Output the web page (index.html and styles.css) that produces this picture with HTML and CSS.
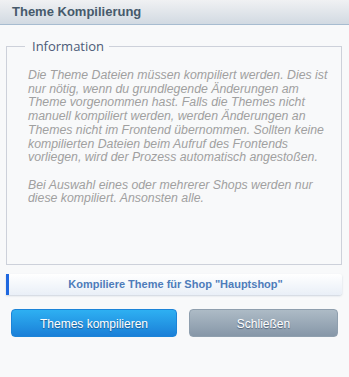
FILE: index.html
```html
<!DOCTYPE html>
<html lang="de">
<head>
    <meta charset="UTF-8">
    <title>Theme Kompilierung</title>
    <link rel="stylesheet" href="styles.css">
</head>
<body>
    <div class="window">
        <div class="titlebar">Theme Kompilierung</div>
        <div class="content">
            <fieldset class="info">
                <legend>Information</legend>
                <p>Die Theme Dateien müssen kompiliert werden. Dies ist nur nötig, wenn du grundlegende Änderungen am Theme vorgenommen hast. Falls die Themes nicht manuell kompiliert werden, werden Änderungen an Themes nicht im Frontend übernommen. Sollten keine kompilierten Dateien beim Aufruf des Frontends vorliegen, wird der Prozess automatisch angestoßen.<br><br>Bei Auswahl eines oder mehrerer Shops werden nur diese kompiliert. Ansonsten alle.</p>
            </fieldset>
            <div class="progress">Kompiliere Theme für Shop "Hauptshop"</div>
            <div class="actions">
                <button class="btn btn-primary">Themes kompilieren</button>
                <button class="btn btn-secondary">Schließen</button>
            </div>
        </div>
    </div>
</body>
</html>
```

FILE: styles.css
```css
body {
    margin: 0;
    font-family: "Liberation Sans", Arial, sans-serif;
    background: #f8f9fa;
}
.window {
    width: 349px;
    height: 377px;
    display: flex;
    flex-direction: column;
}
.titlebar {
    height: 24px;
    line-height: 24px;
    padding-left: 12px;
    font-size: 13px;
    font-weight: bold;
    color: #465a6b;
    background: linear-gradient(#f0f1f3, #d2dae2);
    border-bottom: 1px solid #a7bcd0;
}
.content {
    padding: 12px 7px 0 6px;
}
.info {
    margin: 0;
    padding: 14px 10px 0 21px;
    height: 228px;
    box-sizing: border-box;
    border: 1px solid #cdd1da;
    border-radius: 0;
}
.info legend {
    margin-left: -3px;
    padding: 0 5px 0 7px;
    font-family: "Open Sans", sans-serif;
    font-size: 13px;
    color: #4c5b78;
}
.info p {
    margin: 0;
    font-size: 12.3px;
    line-height: 13.7px;
    font-style: italic;
    color: #a0a0a0;
}
.progress {
    margin-top: 9px;
    height: 21px;
    line-height: 21px;
    text-align: center;
    font-size: 11px;
    font-weight: bold;
    color: #4e7cba;
    background: linear-gradient(#ffffff, #e9eff7);
    border-left: 3px solid #1f68e0;
    border-radius: 0 3px 3px 0;
    box-shadow: 0 1px 2px rgba(120, 140, 170, 0.35);
}
.actions {
    display: flex;
    justify-content: space-between;
    padding: 14px 4px 0 5px;
}
.btn {
    height: 28px;
    padding-top: 2px;
    border-radius: 4px;
    font-family: "Liberation Sans", Arial, sans-serif;
    font-size: 12px;
    color: #ffffff;
    text-shadow: 0 1px 1px rgba(30, 50, 80, 0.6);
    cursor: pointer;
}
.btn-primary {
    width: 166px;
    background: linear-gradient(#2eb0f2, #1b80d8);
    border: 1px solid #1c84d8;
}
.btn-secondary {
    width: 149px;
    background: linear-gradient(#adbbc6, #8697a8);
    border: 1px solid #8f9fae;
}
```
